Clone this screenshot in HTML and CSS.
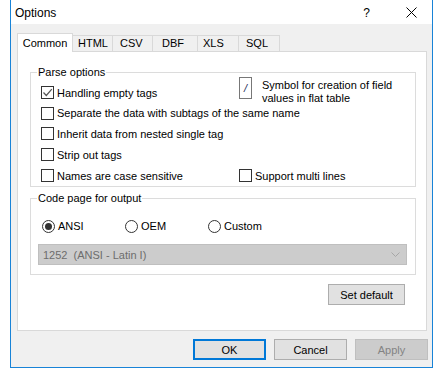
FILE: index.html
```html
<!DOCTYPE html>
<html lang="en">
<head>
    <meta charset="UTF-8">
    <title>Options</title>
    <link rel="stylesheet" href="styles.css">
</head>
<body>
    <div class="window">
        <div class="titlebar">
            <span class="title">Options</span>
            <span class="help">?</span>
            <span class="close">
                <svg width="11" height="11" viewBox="0 0 11 11"><path d="M0.5 0.5 L10.5 10.5 M10.5 0.5 L0.5 10.5" stroke="#000" stroke-width="1"/></svg>
            </span>
        </div>

        <div class="client">
            <div class="tabs">
                <div class="tab active">Common</div>
                <div class="tab tab-html">HTML</div>
                <div class="tab tab-csv">CSV</div>
                <div class="tab tab-dbf">DBF</div>
                <div class="tab tab-xls">XLS</div>
                <div class="tab tab-sql">SQL</div>
            </div>

            <div class="panel">
                <fieldset class="group parse">
                    <legend>Parse options</legend>
                    <div class="parse-grid">
                        <label class="check"><span class="box checked"><svg width="11" height="11" viewBox="0 0 11 11"><path d="M1.5 5.5 L4.3 8.5 L9.8 2.2" fill="none" stroke="#555" stroke-width="1.2"/></svg></span>Handling empty tags</label>
                        <div class="symbol">
                            <span class="symbol-box">/</span>
                            <span class="symbol-text">Symbol for creation of field<br>values in flat table</span>
                        </div>
                        <label class="check wide"><span class="box"></span>Separate the data with subtags of the same name</label>
                        <label class="check wide"><span class="box"></span>Inherit data from nested single tag</label>
                        <label class="check wide"><span class="box"></span>Strip out tags</label>
                        <label class="check"><span class="box"></span>Names are case sensitive</label>
                        <label class="check"><span class="box"></span>Support multi lines</label>
                    </div>
                </fieldset>

                <fieldset class="group codepage">
                    <legend>Code page for output</legend>
                    <div class="radios">
                        <label class="radio"><span class="dot on"></span>ANSI</label>
                        <label class="radio"><span class="dot"></span>OEM</label>
                        <label class="radio"><span class="dot"></span>Custom</label>
                    </div>
                    <div class="combo">
                        <span class="combo-text">1252  (ANSI - Latin I)</span>
                        <svg width="9" height="5" viewBox="0 0 9 5"><path d="M0.5 0.5 L4.5 4.5 L8.5 0.5" fill="none" stroke="#a6a6a6" stroke-width="1"/></svg>
                    </div>
                </fieldset>

                <div class="panel-actions">
                    <button class="btn">Set default</button>
                </div>
            </div>

            <div class="dialog-actions">
                <button class="btn default">OK</button>
                <button class="btn">Cancel</button>
                <button class="btn disabled">Apply</button>
            </div>
        </div>
    </div>
</body>
</html>
```

FILE: styles.css
```css
* {
    margin: 0;
    padding: 0;
    box-sizing: border-box;
}

body {
    background: #fff;
    font-family: 'Liberation Sans', Arial, sans-serif;
    font-size: 11px;
    color: #000;
}

.window {
    margin-left: 10px;
    width: 423px;
    height: 368px;
    border: 1px solid #1883d7;
    border-top: none;
    background: #f0f0f0;
    display: flex;
    flex-direction: column;
}

.titlebar {
    height: 24px;
    background: #fff;
    display: flex;
    align-items: center;
    padding-left: 4px;
    font-size: 12px;
}

.title {
    flex: 1;
    padding-top: 1px;
}

.help {
    margin-right: 36px;
    padding-top: 1px;
}

.close {
    margin-right: 15px;
    display: flex;
}

.client {
    flex: 1;
    padding: 9px 0 0 6px;
}

/* tab strip */
.tabs {
    display: flex;
    height: 18px;
    align-items: flex-end;
    position: relative;
    z-index: 1;
}

.tab {
    height: 16px;
    line-height: 15px;
    border: 1px solid #d9d9d9;
    border-bottom: none;
    border-left: none;
    background: #f0f0f0;
    padding-left: 5px;
}

.tab.active {
    height: 19px;
    width: 56px;
    margin-bottom: -1px;
    border-left: 1px solid #d9d9d9;
    background: #fff;
    text-align: center;
    padding-left: 0;
    line-height: 19px;
}

.tab-html { width: 40px; }
.tab-csv { width: 40px; padding-left: 7px; }
.tab-dbf { width: 45px; padding-left: 9px; }
.tab-xls { width: 41px; }
.tab-sql { width: 41px; padding-left: 7px; }

.panel {
    width: 410px;
    height: 280px;
    border: 1px solid #d9d9d9;
    background: #fff;
    padding: 0 0 0 12px;
}

/* group boxes */
.group {
    width: 386px;
    border: 1px solid #dcdcdc;
    padding: 0 0 0 10px;
}

.group legend {
    margin-left: -4px;
    padding: 0 1px;
    line-height: 14px;
}

.parse {
    margin-top: 13px;
    padding-top: 3px;
}

.parse-grid {
    display: grid;
    grid-template-columns: 198px 1fr;
    grid-template-rows: 21px 20px 21px 21px 21px;
}

.check {
    display: flex;
    align-items: center;
    white-space: nowrap;
}

.check.wide {
    grid-column: 1 / -1;
}

.box {
    width: 13px;
    height: 13px;
    border: 1px solid #333;
    background: #fff;
    margin-right: 3px;
    display: flex;
    align-items: center;
    justify-content: center;
}

.symbol {
    display: flex;
    align-items: flex-start;
    margin-top: -5px;
}

.symbol-box {
    width: 13px;
    height: 22px;
    border: 1px solid #777;
    text-align: center;
    line-height: 20px;
    font-style: italic;
    color: #1b2a55;
    margin-right: 10px;
}

.symbol-text {
    line-height: 13px;
    margin-top: 2px;
}

.codepage {
    margin-top: 4px;
    padding: 11px 0 9px 7px;
}

.codepage legend {
    margin-left: -1px;
}

.radios {
    display: flex;
    height: 20px;
    padding-left: 4px;
}

.radio {
    width: 83px;
    display: flex;
    align-items: center;
}

.dot {
    width: 13px;
    height: 13px;
    border: 1px solid #333;
    border-radius: 50%;
    margin-right: 3px;
    display: flex;
    align-items: center;
    justify-content: center;
}

.dot.on::after {
    content: "";
    width: 7px;
    height: 7px;
    border-radius: 50%;
    background: #333;
}

.combo {
    margin-top: 8px;
    width: 369px;
    height: 21px;
    border: 1px solid #bfbfbf;
    background: #cccccc;
    color: #6d6d6d;
    display: flex;
    align-items: center;
    justify-content: space-between;
    padding: 0 6px 0 4px;
}

.combo-text {
    white-space: pre;
}

.panel-actions {
    display: flex;
    justify-content: flex-end;
    padding: 9px 21px 0 0;
}

/* buttons */
.btn {
    height: 21px;
    width: 73px;
    border: 1px solid #adadad;
    background: #e1e1e1;
    font-family: inherit;
    font-size: 11px;
    color: #000;
}

.panel-actions .btn {
    width: 77px;
}

.btn.default {
    border: 2px solid #0078d7;
}

.btn.disabled {
    border-color: #bfbfbf;
    background: #cccccc;
    color: #838383;
}

.dialog-actions {
    display: flex;
    justify-content: flex-end;
    gap: 8px;
    padding: 8px 4px 0 0;
}
```
